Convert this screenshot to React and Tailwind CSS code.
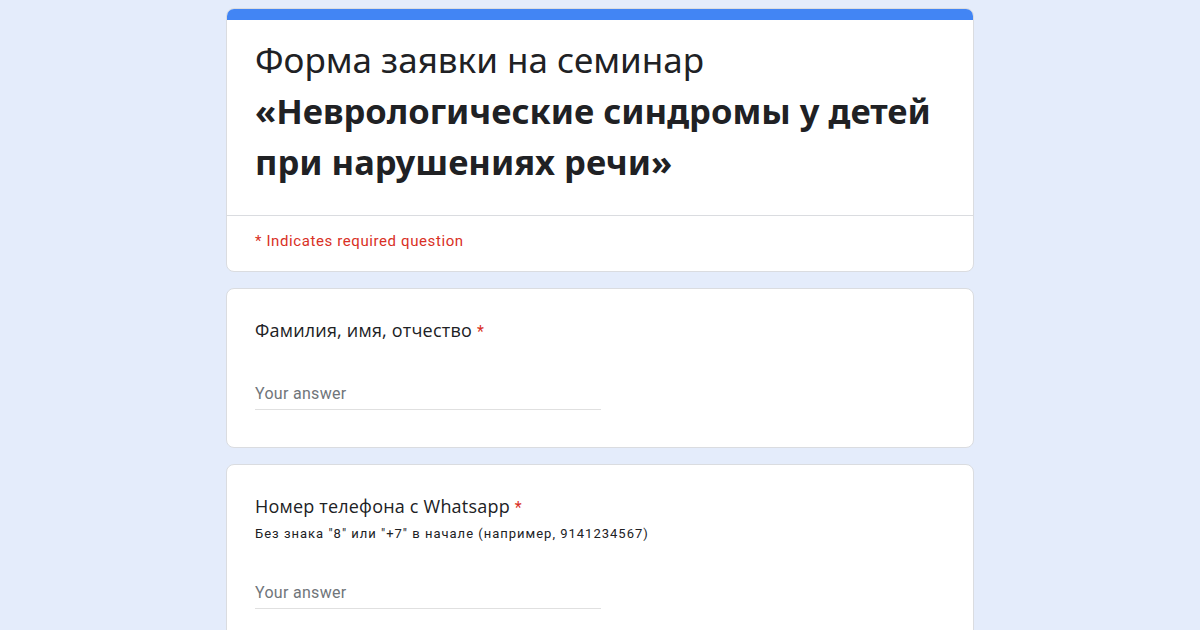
const Question = ({ label, hint }) => (
  <div className="bg-white rounded-lg border border-[#dadce0] px-[28px] pt-[29px] pb-[37px]">
    <div className="text-[18px] leading-[24px] tracking-[0.2px] text-[#202124] font-['Open_Sans','Liberation_Sans',sans-serif]">
      {label} <span className="text-[16px] leading-none text-[#d93025] font-['Roboto','Liberation_Sans',sans-serif]">*</span>
    </div>
    {hint && (
      <div className="mt-[7px] text-[13px] leading-[18px] tracking-[1px] text-[#202124]">{hint}</div>
    )}
    <div className={`${hint ? "mt-[39px]" : "mt-[41px]"} w-[346px] border-b border-[#e0e0e0] pb-[4px] text-[16px] leading-[22px] tracking-[0.3px] text-[#70757a]`}>
      Your answer
    </div>
  </div>
);

export default function App() {
  return (
    <div className="min-h-screen bg-[#e4ecfb] pt-[8px] font-['Roboto','Liberation_Sans',sans-serif]">
      <div className="mx-auto flex w-[748px] flex-col gap-[16px]">
        <div className="overflow-hidden rounded-lg border border-[#dadce0] bg-white">
          <div className="h-[11px] bg-[#4285f4]" />
          <div className="border-b border-[#dadce0] px-[28px] pt-[14px] pb-[28px] text-[35px] leading-[51px] text-[#202124] font-['Noto_Sans','Liberation_Sans',sans-serif]">
            <div className="font-normal">Форма заявки на семинар</div>
            <div className="font-bold text-[34.5px]">«Неврологические синдромы у детей при нарушениях речи»</div>
          </div>
          <div className="px-[28px] pt-[15px] pb-[20px] text-[15px] leading-[20px] tracking-[0.6px] text-[#d93025]">
            * Indicates required question
          </div>
        </div>
        <Question label="Фамилия, имя, отчество" />
        <Question
          label="Номер телефона с Whatsapp"
          hint={'Без знака "8" или "+7" в начале (например, 9141234567)'}
        />
      </div>
    </div>
  );
}
